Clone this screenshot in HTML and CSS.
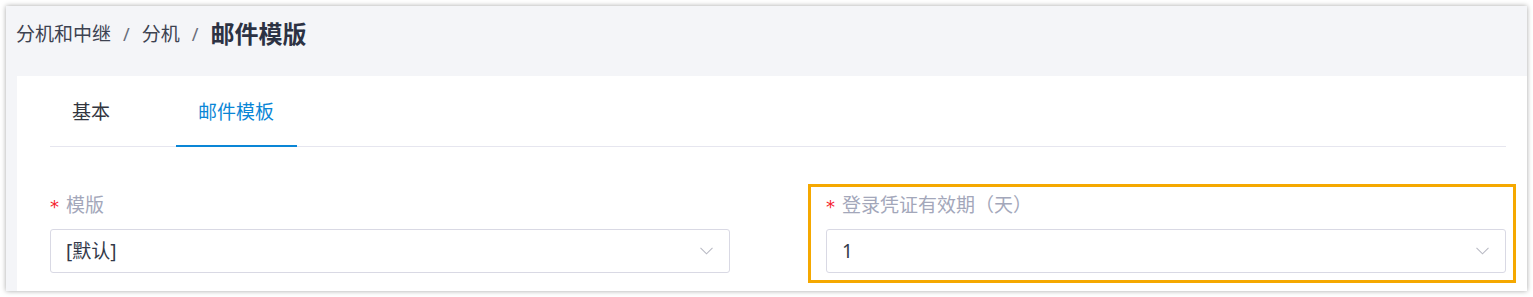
FILE: index.html
```html
<!DOCTYPE html>
<html lang="zh-CN">
<head>
<meta charset="utf-8">
<title>邮件模版</title>
<link rel="stylesheet" href="styles.css">
</head>
<body>
<div class="frame">
  <div class="header">
    <span class="crumb">分机和中继</span>
    <span class="sep">/</span>
    <span class="crumb">分机</span>
    <span class="sep">/</span>
    <span class="crumb-current">邮件模版</span>
  </div>
  <div class="card">
    <div class="tabs">
      <div class="tab">基本</div>
      <div class="tab tab-active">邮件模板</div>
    </div>
    <div class="form-row">
      <div class="form-item">
        <div class="label"><span class="req">*</span>模版</div>
        <div class="select">
          <span class="value">[默认]</span>
          <svg class="chevron" width="13" height="8" viewBox="0 0 13 8"><path d="M0.5 0.8 L6.5 6.8 L12.5 0.8" fill="none" stroke="#b9bac4" stroke-width="1.1"/></svg>
        </div>
      </div>
      <div class="form-item highlighted">
        <div class="label"><span class="req">*</span>登录凭证有效期（天）</div>
        <div class="select">
          <span class="value">1</span>
          <svg class="chevron" width="13" height="8" viewBox="0 0 13 8"><path d="M0.5 0.8 L6.5 6.8 L12.5 0.8" fill="none" stroke="#b9bac4" stroke-width="1.1"/></svg>
        </div>
      </div>
    </div>
  </div>
</div>
</body>
</html>
```
FILE: styles.css
```css
html, body {
  margin: 0;
  padding: 0;
  background: #ffffff;
}
body {
  padding: 6px;
  font-family: "Noto Sans", "Noto Sans CJK SC", sans-serif;
  font-size: 19px;
}
.frame {
  width: 1521px;
  height: 285px;
  background: #f4f5f8;
  box-shadow: 0 0 5px rgba(0, 0, 0, 0.35);
  display: flex;
  flex-direction: column;
  overflow: hidden;
}
.header {
  height: 70px;
  box-sizing: border-box;
  padding: 0 0 14px 10px;
  display: flex;
  align-items: center;
  color: #3d4250;
}
.crumb {
  font-size: 19px;
  line-height: 26px;
}
.sep {
  font-size: 18px;
  line-height: 26px;
  color: #6a6e7a;
  margin: 0 12px;
}
.crumb-current {
  font-size: 24px;
  line-height: 32px;
  font-weight: 700;
  color: #2c3243;
}
.card {
  flex: 1;
  margin-left: 11px;
  background: #ffffff;
  padding: 0 21px 0 33px;
}
.tabs {
  display: flex;
  gap: 44px;
  border-bottom: 1px solid #e6e6ef;
}
.tab {
  position: relative;
  padding: 23px 22px 21px;
  line-height: 26px;
  color: #33363f;
}
.tab-active {
  color: #0a86d6;
}
.tab-active::after {
  content: "";
  position: absolute;
  left: 0;
  right: -1px;
  bottom: -1px;
  height: 2px;
  background: #0a86d6;
}
.form-row {
  display: grid;
  grid-template-columns: 680px 680px;
  column-gap: 96px;
  padding-top: 45px;
}
.form-item {
  position: relative;
}
.highlighted::before {
  content: "";
  position: absolute;
  left: -18px;
  right: -10px;
  top: -8px;
  bottom: -10px;
  border: 3px solid #f5a800;
  pointer-events: none;
}
.label {
  display: flex;
  align-items: center;
  line-height: 26px;
  color: #a3a7ba;
  margin-bottom: 11px;
}
.req {
  color: #f5222d;
  width: 16px;
  font-size: 18px;
  line-height: 26px;
  font-family: "DejaVu Sans", sans-serif;
  position: relative;
  top: 2px;
}
.select {
  height: 44px;
  box-sizing: border-box;
  border: 1px solid #d9d9e4;
  border-radius: 3px;
  display: flex;
  align-items: center;
  justify-content: space-between;
  padding: 0 16px 0 15px;
}
.value {
  color: #333a4a;
  line-height: 26px;
}
.chevron {
  display: block;
}
```
